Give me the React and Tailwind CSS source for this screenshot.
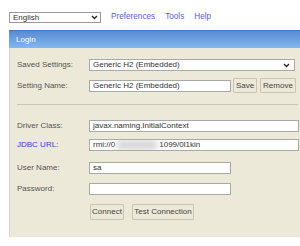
import React from "react";

function Chevron() {
  return (
    <svg width="7" height="5" viewBox="0 0 7 5" className="shrink-0">
      <path d="M1 1 L3.5 3.5 L6 1" fill="none" stroke="#222" strokeWidth="1.3" />
    </svg>
  );
}

function Label({ children, blue }) {
  return (
    <div className={`w-[72px] shrink-0 ${blue ? "text-[#3b3bd6]" : "text-[#555]"}`}>{children}</div>
  );
}

function Input({ w, children }) {
  return (
    <div className={`${w} h-[12px] bg-white border border-[#a9a9a9] flex items-center pl-[3px] text-[#333] overflow-hidden whitespace-nowrap`}>
      {children}
    </div>
  );
}

function Btn({ w, children }) {
  return (
    <div className={`${w} h-[15px] border border-[#c8c5b6] bg-[#ece9d8] rounded-[1px] flex items-center justify-center text-[#444]`}>
      {children}
    </div>
  );
}

export default function App() {
  return (
    <div className="w-[300px] h-[246px] bg-white overflow-hidden font-['Liberation_Sans',Arial,sans-serif] text-[8px] leading-none">
      <div className="flex items-center pt-[12px] pl-[9px]">
        <div className="w-[92px] h-[11px] bg-white border border-[#9a9a9a] flex items-center justify-between pl-[3px] pr-[2px] text-[#333]">
          <span>English</span>
          <Chevron />
        </div>
        <div className="flex gap-[10px] ml-[10px] text-[#5b5bdc] text-[8.2px]">
          <span>Preferences</span>
          <span>Tools</span>
          <span>Help</span>
        </div>
      </div>
      <div className="ml-[9px] mt-[7px] w-[300px]">
        <div className="h-[18px] bg-gradient-to-b from-[#5a8ad2] to-[#82b8ee] text-white flex items-center pl-[7px] border-t border-[#4a78c0]">
          Login
        </div>
        <div className="h-[189px] bg-[#ece9d8] pl-[7px] pt-[11px] border-l border-[#d8d5c6]">
          <div className="flex items-center">
            <Label>Saved Settings:</Label>
            <div className="w-[206px] h-[12px] bg-white border border-[#a9a9a9] flex items-center justify-between pl-[3px] pr-[4px] text-[#333]">
              <span>Generic H2 (Embedded)</span>
              <Chevron />
            </div>
          </div>
          <div className="flex items-center mt-[7px]">
            <Label>Setting Name:</Label>
            <Input w="w-[142px]">Generic H2 (Embedded)</Input>
            <div className="ml-[2px]"><Btn w="w-[24px]">Save</Btn></div>
            <div className="ml-[3px]"><Btn w="w-[36px]">Remove</Btn></div>
          </div>
          <div className="mt-[11px] h-px bg-[#c9c6b8] w-[281px]" />
          <div className="flex items-center mt-[15px]">
            <Label>Driver Class:</Label>
            <Input w="w-[210px]">javax.naming.InitialContext</Input>
          </div>
          <div className="flex items-center mt-[7px]">
            <Label blue>JDBC URL:</Label>
            <Input w="w-[210px]">
              <span>rmi://0</span>
              <span className="relative w-[40px] h-[10px] mx-[2px]">
                <span className="absolute inset-0 bg-[#d6d6d6] blur-[3px]" />
              </span>
              <span>1099/0l1kin</span>
            </Input>
          </div>
          <div className="flex items-center mt-[11px]">
            <Label>User Name:</Label>
            <Input w="w-[142px]">sa</Input>
          </div>
          <div className="flex items-center mt-[9px]">
            <Label>Password:</Label>
            <Input w="w-[142px]"></Input>
          </div>
          <div className="flex items-center mt-[9px] pl-[73px] gap-[8px]">
            <Btn w="w-[34px] h-[16px]">Connect</Btn>
            <Btn w="w-[62px] h-[16px]">Test Connection</Btn>
          </div>
        </div>
      </div>
    </div>
  );
}
